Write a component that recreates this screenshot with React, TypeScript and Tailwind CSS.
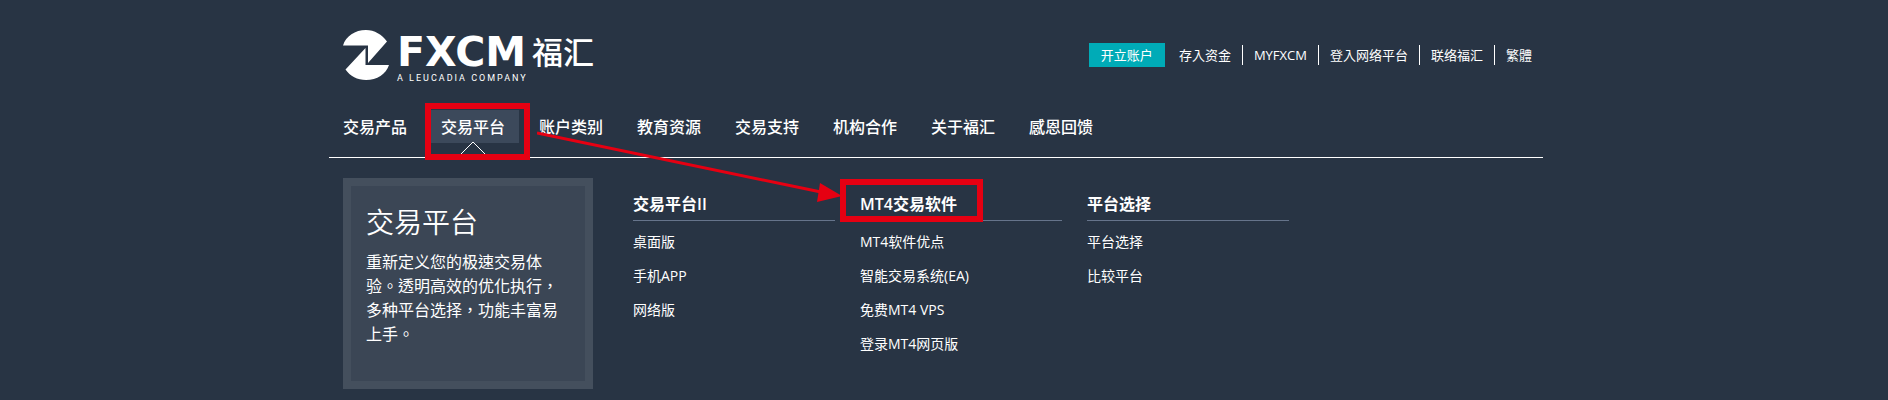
type Column = { title: string; links: string[]; marked?: boolean };

const topLinks = ["存入资金", "MYFXCM", "登入网络平台", "联络福汇", "繁體"];

const navItems = [
  "交易产品",
  "交易平台",
  "账户类别",
  "教育资源",
  "交易支持",
  "机构合作",
  "关于福汇",
  "感恩回馈",
];

const columns: Column[] = [
  { title: "交易平台II", links: ["桌面版", "手机APP", "网络版"] },
  {
    title: "MT4交易软件",
    links: ["MT4软件优点", "智能交易系统(EA)", "免费MT4 VPS", "登录MT4网页版"],
    marked: true,
  },
  { title: "平台选择", links: ["平台选择", "比较平台"] },
];

function Logo() {
  return (
    <a href="#" className="flex items-start gap-2">
      <svg width="46" height="50" viewBox="0 0 46 50" fill="#fff" aria-hidden="true">
        <path d="M0 15.500C3 6 12 0 23 0c8.500 0 16 4.500 21 11.500L25 33V15.500Z" />
        <path d="M22.500 18v17H46c-3 9-12 15-23 15-8.500 0-16-4-20.500-10.500Z" />
      </svg>
      <span className="flex flex-col">
        <span className="flex h-11 items-center gap-1.5">
          <span className="font-['DejaVu_Sans'] text-[41px] leading-11 font-bold">FXCM</span>
          <span className="text-[31px] leading-11 font-medium">福汇</span>
        </span>
        <span className="-mt-1 font-[Roboto] text-[9px] leading-4 tracking-[2px]">
          A LEUCADIA COMPANY
        </span>
      </span>
    </a>
  );
}

function TopBar() {
  return (
    <div className="flex items-center gap-3.5 text-[13px] leading-5">
      <button type="button" className="h-6 bg-[#00abb7] px-3">
        开立账户
      </button>
      <ul className="flex divide-x divide-white">
        {topLinks.map((label) => (
          <li key={label} className="px-[11px] first:pl-0 last:pr-0">
            <a href="#">{label}</a>
          </li>
        ))}
      </ul>
    </div>
  );
}

function MainNav() {
  return (
    <nav className="border-b border-white px-1 pb-3.5">
      <ul className="flex gap-2.5">
        {navItems.map((label) => {
          const active = label === "交易平台";
          return (
            <li key={label} className="relative">
              <a
                href="#"
                className={
                  "block h-[33px] pr-3.5 pl-2.5 text-base leading-[34px] font-medium " +
                  (active ? "bg-[#3c495b]" : "")
                }
              >
                {label}
              </a>
              {active && (
                <>
                  <svg
                    className="absolute top-[31px] left-7"
                    width="28"
                    height="14"
                    viewBox="0 0 28 14"
                    fill="none"
                    stroke="#fff"
                    aria-hidden="true"
                  >
                    <path d="M1 14 14 1l13 13" />
                  </svg>
                  <span className="absolute -top-[7px] -left-1.5 h-[57px] w-[105px] border-[6px] border-[#e60012]" />
                </>
              )}
            </li>
          );
        })}
      </ul>
    </nav>
  );
}

function MenuColumn({ title, links, marked }: Column) {
  return (
    <section className="w-[202px]">
      <h3 className="relative border-b border-[#66748b] pt-3.5 pb-1 text-base leading-6 font-semibold">
        {title}
        {marked && (
          <span className="absolute top-px -left-5 h-[43px] w-[143px] border-[6px] border-[#e60012]" />
        )}
      </h3>
      <ul className="pt-1 text-sm">
        {links.map((link) => (
          <li key={link} className="leading-[34px]">
            <a href="#">{link}</a>
          </li>
        ))}
      </ul>
    </section>
  );
}

export default function App() {
  return (
    <div className="min-h-screen bg-[#283444] pr-4 font-['Open_Sans','Noto_Sans_CJK_TC',sans-serif] text-white">
      <div className="relative mx-auto max-w-[1214px]">
        <header className="flex h-[110px] items-start justify-between pt-[30px] pr-[11px] pl-3.5">
          <Logo />
          <div className="pt-[13px]">
            <TopBar />
          </div>
        </header>
        <MainNav />
        <main className="flex gap-10 pt-5 pl-3.5">
          <section className="h-[211px] w-[250px] border-8 border-[#444f5d] bg-[#3b4655] px-[15px] pt-[18px]">
            <h2 className="text-[28px] leading-9 font-[350]">交易平台</h2>
            <p className="mt-2.5 text-base leading-6">
              重新定义您的极速交易体验。透明高效的优化执行，多种平台选择，功能丰富易上手。
            </p>
          </section>
          <div className="flex gap-[25px]">
            {columns.map((column) => (
              <MenuColumn key={column.title} {...column} />
            ))}
          </div>
        </main>
        <svg
          className="pointer-events-none absolute top-[130px] left-52"
          width="306"
          height="75"
          viewBox="0 0 306 75"
          aria-hidden="true"
        >
          <path d="M0 3 284 62" stroke="#e60012" strokeWidth="3" />
          <path d="M283 53 305 66l-25 6Z" fill="#e60012" />
        </svg>
      </div>
    </div>
  );
}
